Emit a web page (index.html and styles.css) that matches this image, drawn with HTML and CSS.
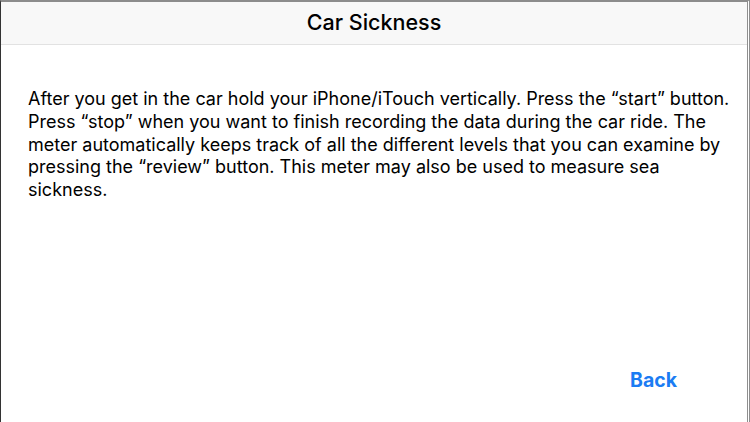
FILE: index.html
```html
<!DOCTYPE html>
<html>
<head>
<meta charset="utf-8">
<link rel="stylesheet" href="styles.css">
</head>
<body>
<div class="screen">
  <header class="navbar"><h1 class="title">Car Sickness</h1></header>
  <main class="content">
    <p class="instructions">After you get in the car hold your iPhone/iTouch vertically. Press the “start” button. Press “stop” when you want to finish recording the data during the car ride. The meter automatically keeps track of all the different levels that you can examine by pressing the “review” button. This meter may also be used to measure sea sickness.</p>
    <div class="actions"><a class="back">Back</a></div>
  </main>
</div>
</body>
</html>
```
FILE: styles.css
```css
html, body { margin: 0; padding: 0; background: #fff; }
body { width: 750px; height: 422px; overflow: hidden; font-family: Inter, "Liberation Sans", sans-serif; }
.screen {
  box-sizing: border-box;
  width: 750px; height: 422px;
  border-top: 2px solid #8c8c8c;
  border-left: 1px solid #333;
  border-right: 3px double #8f8f8f;
  display: flex; flex-direction: column;
}
.navbar {
  box-sizing: border-box;
  height: 43px;
  background: #f8f8f8;
  border-bottom: 1px solid #e2e2e2;
  display: flex; align-items: center; justify-content: center;
  padding-bottom: 2px;
}
.title { margin: 0; font-size: 21.5px; font-weight: 500; color: #000; letter-spacing: 0; }
.content { flex: 1; display: flex; flex-direction: column; padding: 43px 0 0 27px; }
.instructions { margin: 0; font-size: 18px; line-height: 22.8px; color: #000; width: 712px; }
.actions { margin-top: auto; display: flex; justify-content: flex-end; padding: 0 70px 30px 0; }
.back { color: #1b7cf3; font-weight: 700; font-size: 19.5px; }
```
